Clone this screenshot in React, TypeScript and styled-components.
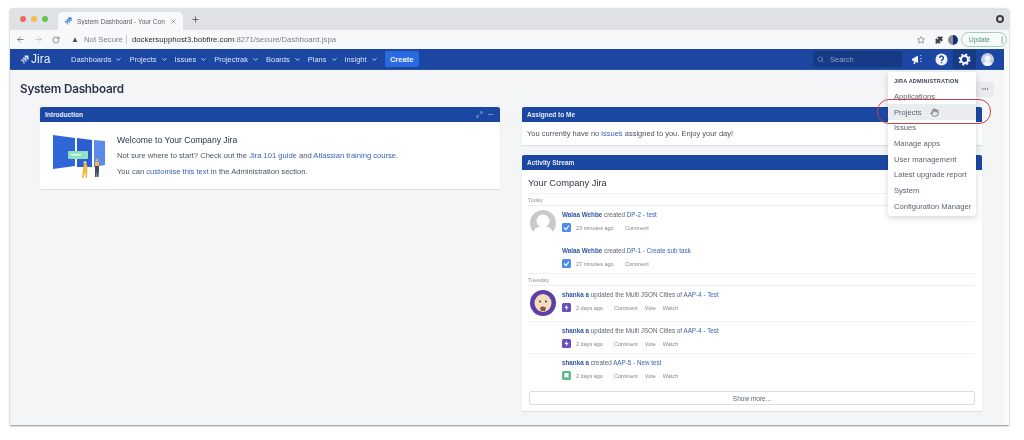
import styled, { createGlobalStyle } from "styled-components";
import {
  ArrowLeft,
  ArrowRight,
  ChevronDown,
  Hand,
  Maximize2,
  MoreHorizontal,
  Puzzle,
  RotateCw,
  Search,
  Star,
  X,
  Plus,
  MoreVertical,
} from "lucide-react";

const GlobalStyle = createGlobalStyle`
  html, body {
    margin: 0;
    background: #fff;
    font-family: "Liberation Sans", Arial, sans-serif;
  }
  * { box-sizing: border-box; }
`;

const Stage = styled.div`
  width: 1024px;
  height: 440px;
  padding: 8px 15px 0 10px;
  overflow: hidden;
  filter: blur(0.35px);
`;

const Window = styled.div`
  position: relative;
  width: 999px;
  height: 417px;
  display: flex;
  flex-direction: column;
  background: #fafafa;
  box-shadow: 0 1px 2px rgba(0, 0, 0, 0.45);
  border-radius: 3px 3px 0 0;
  overflow: hidden;
`;

const TabStrip = styled.div`
  height: 22px;
  display: flex;
  align-items: flex-end;
  background: #dfe1e4;
  padding-left: 10px;
`;

const Lights = styled.div`
  display: flex;
  gap: 5px;
  align-self: center;
  margin-right: 10px;
`;

const Light = styled.span<{ $color: string }>`
  width: 6px;
  height: 6px;
  border-radius: 50%;
  background: ${(p) => p.$color};
`;

const Tab = styled.div`
  width: 125px;
  height: 18px;
  display: flex;
  align-items: center;
  gap: 5px;
  padding: 0 6px;
  background: #f8f9fa;
  border-radius: 5px 5px 0 0;
  font-size: 6.5px;
  color: #5b5e63;
  white-space: nowrap;
`;

const TabIcon = styled.span`
  display: flex;
  color: #2b6fd6;
`;

const TabTitle = styled.span`
  flex: 1;
  overflow: hidden;
`;

const NewTab = styled.span`
  display: flex;
  align-self: center;
  margin-left: 8px;
  color: #44474b;
`;

const StripEnd = styled.span`
  margin-left: auto;
  margin-right: 5px;
  align-self: center;
  width: 8px;
  height: 8px;
  border-radius: 50%;
  border: 2.5px solid #3c4043;
  background: #dfe1e4;
`;

const AddressBar = styled.div`
  height: 19px;
  display: flex;
  align-items: center;
  background: #f7f8f9;
  padding: 0 2px 0 6px;
  color: #5f6368;
`;

const NavButtons = styled.div`
  display: flex;
  align-items: center;
  gap: 9px;
  width: 52px;
`;

const UrlPill = styled.div`
  flex: 1;
  height: 16px;
  display: flex;
  align-items: center;
  font-size: 7.8px;
  color: #7f8287;
`;

const Warning = styled.span`
  margin: 0 5px 0 3px;
  font-size: 8px;
  color: #4d5054;
`;

const UrlDivider = styled.span`
  width: 1px;
  height: 9px;
  background: #c9cbce;
  margin: 0 5px 0 3px;
`;

const Host = styled.span`
  color: #2c2e31;
`;

const ToolIcons = styled.div`
  display: flex;
  align-items: center;
  gap: 10px;
  margin-right: 5px;
`;

const ProfileDot = styled.span`
  width: 10px;
  height: 10px;
  margin-right: 3px;
  border-radius: 50%;
  background: linear-gradient(90deg, #8a8d92 45%, #12307c 45%);
`;

const UpdatePill = styled.div`
  width: 46px;
  height: 15px;
  display: flex;
  align-items: center;
  justify-content: space-between;
  padding: 0 0 0 7px;
  border: 1px solid #a9cdb0;
  border-radius: 8px;
  font-size: 6.5px;
  color: #4f9a68;
`;

const Body = styled.div`
  flex: 1;
  display: flex;
  flex-direction: column;
  margin-right: 5px;
  background: #f4f5f7;
`;

const TopNav = styled.nav`
  height: 21px;
  display: flex;
  align-items: center;
  background: #1b47a3;
  border-bottom: 1px solid #2d55aa;
  padding-left: 10px;
  color: #d9e3f5;
  font-size: 7.5px;
`;

const Logo = styled.div`
  display: flex;
  align-items: center;
  gap: 2px;
  width: 51px;
  color: #e9eef8;
  font-size: 12px;
`;

const NavItem = styled.span`
  display: flex;
  align-items: center;
  gap: 4px;
  margin-right: 7px;
  white-space: nowrap;
`;

const CreateButton = styled.span`
  height: 16px;
  width: 34px;
  display: flex;
  align-items: center;
  justify-content: center;
  background: #2a6ae0;
  border-radius: 2px;
  color: #e8f0fd;
  font-weight: bold;
  font-size: 7.5px;
`;

const SearchBox = styled.div`
  width: 89px;
  height: 16px;
  margin-left: auto;
  margin-right: 3px;
  display: flex;
  align-items: center;
  gap: 6px;
  padding-left: 4px;
  background: #173a84;
  color: #8ea2cb;
  font-size: 7.5px;
`;

const NavIcon = styled.span<{ $active?: boolean }>`
  width: 23px;
  height: 20px;
  margin-left: ${(p) => (p.$active ? "0" : "1px")};
  display: flex;
  align-items: center;
  justify-content: center;
  background: ${(p) => (p.$active ? "#173a84" : "transparent")};
  color: #f1f4fa;
`;

const Avatar = styled.span`
  display: flex;
  margin: 0 10px 0 5px;
`;

const PageHead = styled.div`
  height: 36px;
  display: flex;
  align-items: center;
  justify-content: space-between;
  padding: 1px 10px 0 10px;
`;

const PageTitle = styled.h1`
  margin: 0;
  font-family: Inter, "Liberation Sans", sans-serif;
  font-size: 11.7px;
  font-weight: 600;
  color: #2b3448;
  letter-spacing: -0.2px;
`;

const DotsButton = styled.span`
  width: 18px;
  height: 15px;
  margin-top: 1px;
  display: flex;
  align-items: center;
  justify-content: center;
  background: #e9eaee;
  border-radius: 2px;
  color: #5f6675;
`;

const Columns = styled.div`
  display: grid;
  grid-template-columns: 460px 460px;
  gap: 22px;
  padding-left: 30px;
  padding-top: 1px;
`;

const Column = styled.div`
  display: flex;
  flex-direction: column;
  gap: 10px;
`;

const Gadget = styled.section`
  background: #fff;
  box-shadow: 0 1px 1px rgba(9, 30, 66, 0.1);
`;

const GadgetHeader = styled.header`
  height: 15px;
  display: flex;
  align-items: center;
  justify-content: space-between;
  padding: 0 6px 0 5px;
  background: #1b47a3;
  border-radius: 2px 2px 0 0;
  color: #e6ecf8;
  font-size: 6.5px;
  font-weight: bold;
`;

const HeaderTools = styled.span`
  display: flex;
  gap: 4px;
  color: #a9bbdf;
`;

const IntroBody = styled.div`
  height: 67px;
  display: flex;
  align-items: center;
  padding-left: 13px;
  gap: 11px;
  color: #4a5265;
  font-size: 7.6px;
`;

const IntroText = styled.div`
  display: flex;
  flex-direction: column;
  gap: 6.5px;
  margin-top: -1px;
`;

const IntroTitle = styled.div`
  font-size: 8.6px;
  color: #2b3448;
`;

const Line = styled.div`
  white-space: nowrap;
`;

const A = styled.span`
  color: #3b63b5;
`;

const Strong = styled.span`
  color: #2f55a8;
  font-weight: bold;
`;

const AssignedBody = styled.div`
  height: 23px;
  display: flex;
  align-items: center;
  padding-left: 5px;
  color: #4a5265;
  font-size: 7.5px;
`;

const StreamBody = styled.div`
  height: 241px;
  padding: 8px 7px 0 6px;
  color: #5b6376;
`;

const StreamTitle = styled.div`
  height: 15px;
  font-size: 9.3px;
  color: #2b3448;
`;

const DayLabel = styled.div`
  height: 13px;
  display: flex;
  align-items: center;
  border-top: 1px solid #f0f1f3;
  border-bottom: 1px solid #eceef1;
  font-size: 5.5px;
  color: #8d93a0;
`;

const Entry = styled.div<{ $height: number; $rule?: boolean }>`
  position: relative;
  height: ${(p) => p.$height}px;
  padding: 3px 0 0 34px;
  border-bottom: ${(p) => (p.$rule ? "1px solid #f2f3f5" : "none")};
`;

const EntryAvatar = styled.div`
  position: absolute;
  left: 2px;
  top: 4px;
`;

const EntryText = styled.div`
  height: 11px;
  font-size: 6.3px;
  line-height: 11px;
  white-space: nowrap;
`;

const Meta = styled.div`
  display: flex;
  align-items: center;
  height: 9px;
  margin-top: 3px;
  font-size: 5.5px;
  color: #7e8698;
`;

const TypeIcon = styled.span<{ $color: string }>`
  width: 9px;
  height: 9px;
  display: flex;
  align-items: center;
  justify-content: center;
  margin-right: 5px;
  border-radius: 1.5px;
  background: ${(p) => p.$color};
`;

const Time = styled.span<{ $wide: boolean }>`
  width: ${(p) => (p.$wide ? "49px" : "38px")};
`;

const Action = styled.span`
  margin-right: 7px;
`;

const ShowMore = styled.div`
  height: 14px;
  margin: 8px 0 0 1px;
  display: flex;
  align-items: center;
  justify-content: center;
  background: #fff;
  border: 1px solid #dcdee3;
  border-radius: 2px;
  font-size: 6.5px;
  color: #5b6376;
`;

const Menu = styled.div`
  position: absolute;
  left: 878px;
  top: 64px;
  width: 88px;
  height: 144px;
  padding-top: 2px;
  background: #fff;
  border-radius: 0 0 3px 3px;
  box-shadow: 0 2px 6px rgba(9, 30, 66, 0.18);
  font-size: 7.6px;
  color: #5a6172;
`;

const MenuHeading = styled.div`
  height: 14.5px;
  display: flex;
  align-items: center;
  padding-left: 6px;
  font-size: 5.5px;
  font-weight: bold;
  color: #3d4557;
  letter-spacing: 0.2px;
`;

const MenuItem = styled.div<{ $hover?: boolean }>`
  height: 15.7px;
  display: flex;
  align-items: center;
  gap: 9px;
  padding-left: 6px;
  white-space: nowrap;
  background: ${(p) => (p.$hover ? "#ebecf0" : "transparent")};
`;

const RedOutline = styled.div`
  position: absolute;
  left: 867px;
  top: 91px;
  width: 114px;
  height: 25px;
  border: 1px solid #c8413e;
  border-radius: 12px;
`;

const JiraMark = ({ size }: { size: number }) => (
  <svg width={size} height={size} viewBox="0 0 16 16" fill="currentColor">
    <path d="M15 1H8c0 2 1.6 3.5 3.4 3.5h1.2v1.2c0 1.9 1.5 3.4 2.4 3.4z" />
    <path d="M11.5 4.5h-7c0 2 1.6 3.5 3.4 3.5h1.2v1.2c0 1.9 1.5 3.4 2.4 3.4z" opacity=".85" />
    <path d="M8 8H1c0 2 1.6 3.5 3.4 3.5h1.2v1.2c0 1.9 1.5 3.4 2.4 3.4z" opacity=".7" />
  </svg>
);

const Megaphone = () => (
  <svg width="13" height="11" viewBox="0 0 13 11" fill="currentColor">
    <path d="M1 5l6-3.5V9L4.6 7.8 4 10H2.6l.3-2.9L1 6.5z" />
    <path d="M9 1.5l1-.8.5.6-1 .8zM9.4 4.2h1.5v.9H9.4zM9 7l.6-.6 1 .9-.6.6z" />
  </svg>
);

const HelpIcon = () => (
  <svg width="13" height="13" viewBox="0 0 13 13">
    <circle cx="6.5" cy="6.5" r="6" fill="currentColor" />
    <path d="M4.6 5a1.9 1.9 0 1 1 2.9 1.6c-.7.4-1 .7-1 1.4" fill="none" stroke="#1b47a3" strokeWidth="1.4" />
    <circle cx="6.5" cy="9.8" r=".8" fill="#1b47a3" />
  </svg>
);

const GearIcon = () => (
  <svg width="13" height="13" viewBox="0 0 13 13" fill="none" stroke="currentColor">
    <circle cx="6.5" cy="6.5" r="3.6" strokeWidth="2.2" />
    <circle cx="6.5" cy="6.5" r="5.2" strokeWidth="1.6" strokeDasharray="2.1 2" />
  </svg>
);

const UserIcon = () => (
  <svg width="13" height="13" viewBox="0 0 13 13">
    <circle cx="6.500" cy="6.500" r="6.500" fill="#c3cbdc" />
    <circle cx="6.500" cy="5.500" r="3" fill="#f2f4f8" />
    <path d="M2 11.200c.8-2.200 2.500-3 4.500-3s3.700.8 4.500 3a6.500 6.500 0 0 1-9 0z" fill="#f2f4f8" />
  </svg>
);

const Illustration = () => (
  <svg width="53" height="47" viewBox="0 0 53 47">
    <path d="M0 3l22 3v28L0 37z" fill="#2f66d8" />
    <path d="M24 6l15 2v27H24z" fill="#2b5fd0" />
    <path d="M41 8l11 1v24l-11 2z" fill="#5a8bea" />
    <rect x="15" y="19" width="20" height="8" rx="1" fill="#8fe3c0" />
    <rect x="18" y="22" width="10" height="1.5" fill="#e8fbf3" />
    <path d="M31 32l3 .5.5 5-.5 8.500h-1.500l-.3-6-1.700 6H29l1-9z" fill="#f5b942" />
    <circle cx="32" cy="30.500" r="1.600" fill="#f3c9a5" />
    <path d="M42 30h4v8l-.5 7H44l-.2-6-.3 6H42z" fill="#3f4a5f" />
    <path d="M42 30h4v4h-4z" fill="#f5b942" />
    <circle cx="44" cy="28" r="1.600" fill="#e2a779" />
  </svg>
);

const GreyAvatar = () => (
  <svg width="26" height="26" viewBox="0 0 26 26">
    <circle cx="13" cy="13" r="13" fill="#c9cace" />
    <circle cx="13" cy="11" r="6.5" fill="#fff" />
    <path d="M3 23c1.5-5 5.5-7 10-7s8.500 2 10 7a13 13 0 0 1-20 0z" fill="#fff" />
  </svg>
);

const FaceAvatar = () => (
  <svg width="26" height="26" viewBox="0 0 26 26">
    <circle cx="13" cy="13" r="13" fill="#5b3fa6" />
    <ellipse cx="13" cy="13" rx="8.500" ry="9" fill="#f4dcc0" />
    <circle cx="10" cy="11.500" r="1" fill="#5c4030" />
    <circle cx="16" cy="11.500" r="1" fill="#5c4030" />
    <path d="M10 18c1-2 5-2 6 0l-1 3h-4z" fill="#8a5a3c" />
  </svg>
);

const Check = () => (
  <svg width="7" height="7" viewBox="0 0 7 7">
    <path d="M1 3.500l2 2 3-4" fill="none" stroke="#fff" strokeWidth="1.2" />
  </svg>
);

const Bolt = () => (
  <svg width="7" height="7" viewBox="0 0 7 7">
    <path d="M4.200.5L1.500 4h1.800L2.800 6.500 5.500 3H3.700z" fill="#fff" />
  </svg>
);

const Bookmark = () => (
  <svg width="7" height="7" viewBox="0 0 7 7">
    <path d="M1.500 1h4v5L3.500 4.700 1.500 6z" fill="#fff" />
  </svg>
);

const navItems = ["Dashboards", "Projects", "Issues", "Projectrak", "Boards", "Plans", "Insight"];

const menuItems = [
  "Applications",
  "Projects",
  "Issues",
  "Manage apps",
  "User management",
  "Latest upgrade report",
  "System",
  "Configuration Manager",
];

type StreamEntry = {
  user: string;
  verb: string;
  link: string;
  time: string;
  kind: "task" | "bolt" | "story";
  height: number;
  avatar?: "grey" | "face";
  rule?: boolean;
};

const today: StreamEntry[] = [
  { user: "Walaa Wehbe", verb: "created", link: "DP-2 - test", time: "23 minutes ago", kind: "task", height: 36, avatar: "grey" },
  { user: "Walaa Wehbe", verb: "created", link: "DP-1 - Create sub task", time: "27 minutes ago", kind: "task", height: 31 },
];

const tuesday: StreamEntry[] = [
  { user: "shanka a", verb: "updated the Multi JSON Cities of", link: "AAP-4 - Test", time: "2 days ago", kind: "bolt", height: 36, avatar: "face", rule: true },
  { user: "shanka a", verb: "updated the Multi JSON Cities of", link: "AAP-4 - Test", time: "2 days ago", kind: "bolt", height: 32, rule: true },
  { user: "shanka a", verb: "created", link: "AAP-5 - New test", time: "2 days ago", kind: "story", height: 29 },
];

const typeColor = { task: "#4b8bf0", bolt: "#6a4fc0", story: "#5cb98a" };

const StreamRow = ({ entry }: { entry: StreamEntry }) => (
  <Entry $height={entry.height} $rule={entry.rule}>
    {entry.avatar && (
      <EntryAvatar>{entry.avatar === "grey" ? <GreyAvatar /> : <FaceAvatar />}</EntryAvatar>
    )}
    <EntryText>
      <Strong>{entry.user}</Strong> {entry.verb} <A>{entry.link}</A>
    </EntryText>
    <Meta>
      <TypeIcon $color={typeColor[entry.kind]}>
        {entry.kind === "task" && <Check />}
        {entry.kind === "bolt" && <Bolt />}
        {entry.kind === "story" && <Bookmark />}
      </TypeIcon>
      <Time $wide={entry.kind === "task"}>{entry.time}</Time>
      <Action>Comment</Action>
      {entry.kind !== "task" && <Action>Vote</Action>}
      {entry.kind !== "task" && <Action>Watch</Action>}
    </Meta>
  </Entry>
);

const App: React.FC = () => (
  <>
    <GlobalStyle />
    <Stage>
      <Window>
        <TabStrip>
          <Lights>
            <Light $color="#ec6a5e" />
            <Light $color="#f4bf4f" />
            <Light $color="#61c554" />
          </Lights>
          <Tab>
            <TabIcon>
              <JiraMark size={8} />
            </TabIcon>
            <TabTitle>System Dashboard - Your Con</TabTitle>
            <X size={7} strokeWidth={2} />
          </Tab>
          <NewTab>
            <Plus size={9} strokeWidth={2} />
          </NewTab>
          <StripEnd />
        </TabStrip>
        <AddressBar>
          <NavButtons>
            <ArrowLeft size={9} />
            <ArrowRight size={9} color="#b4b7bb" />
            <RotateCw size={8} />
          </NavButtons>
          <UrlPill>
            <Warning>▲</Warning>
            Not Secure
            <UrlDivider />
            <span>
              <Host>dockersupphost3.bobfire.com</Host>:8271/secure/Dashboard.jspa
            </span>
          </UrlPill>
          <ToolIcons>
            <Star size={8} />
            <Puzzle size={8} fill="#3c4043" color="#3c4043" />
          </ToolIcons>
          <ProfileDot />
          <UpdatePill>
            Update
            <MoreVertical size={8} />
          </UpdatePill>
        </AddressBar>
        <Body>
          <TopNav>
            <Logo>
              <JiraMark size={9} />
              Jira
            </Logo>
            {navItems.map((item) => (
              <NavItem key={item}>
                {item}
                <ChevronDown size={7} strokeWidth={3} />
              </NavItem>
            ))}
            <CreateButton>Create</CreateButton>
            <SearchBox>
              <Search size={7} />
              Search
            </SearchBox>
            <NavIcon>
              <Megaphone />
            </NavIcon>
            <NavIcon>
              <HelpIcon />
            </NavIcon>
            <NavIcon $active>
              <GearIcon />
            </NavIcon>
            <Avatar>
              <UserIcon />
            </Avatar>
          </TopNav>
          <PageHead>
            <PageTitle>System Dashboard</PageTitle>
            <DotsButton>
              <MoreHorizontal size={8} />
            </DotsButton>
          </PageHead>
          <Columns>
            <Column>
              <Gadget>
                <GadgetHeader>
                  Introduction
                  <HeaderTools>
                    <Maximize2 size={7} />
                    <MoreHorizontal size={7} />
                  </HeaderTools>
                </GadgetHeader>
                <IntroBody>
                  <Illustration />
                  <IntroText>
                    <IntroTitle>Welcome to Your Company Jira</IntroTitle>
                    <Line>
                      Not sure where to start? Check out the <A>Jira 101 guide</A> and{" "}
                      <A>Atlassian training course.</A>
                    </Line>
                    <Line>
                      You can <A>customise this text</A> in the Administration section.
                    </Line>
                  </IntroText>
                </IntroBody>
              </Gadget>
            </Column>
            <Column>
              <Gadget>
                <GadgetHeader>Assigned to Me</GadgetHeader>
                <AssignedBody>
                  <Line>
                    You currently have no <A>issues</A> assigned to you. Enjoy your day!
                  </Line>
                </AssignedBody>
              </Gadget>
              <Gadget>
                <GadgetHeader>Activity Stream</GadgetHeader>
                <StreamBody>
                  <StreamTitle>Your Company Jira</StreamTitle>
                  <DayLabel>Today</DayLabel>
                  {today.map((entry) => (
                    <StreamRow key={entry.link} entry={entry} />
                  ))}
                  <DayLabel>Tuesday</DayLabel>
                  {tuesday.map((entry, i) => (
                    <StreamRow key={i} entry={entry} />
                  ))}
                  <ShowMore>Show more...</ShowMore>
                </StreamBody>
              </Gadget>
            </Column>
          </Columns>
        </Body>
        <Menu>
          <MenuHeading>JIRA ADMINISTRATION</MenuHeading>
          {menuItems.map((item) => (
            <MenuItem key={item} $hover={item === "Projects"}>
              {item}
              {item === "Projects" && <Hand size={9} />}
            </MenuItem>
          ))}
        </Menu>
        <RedOutline />
      </Window>
    </Stage>
  </>
);

export default App;
